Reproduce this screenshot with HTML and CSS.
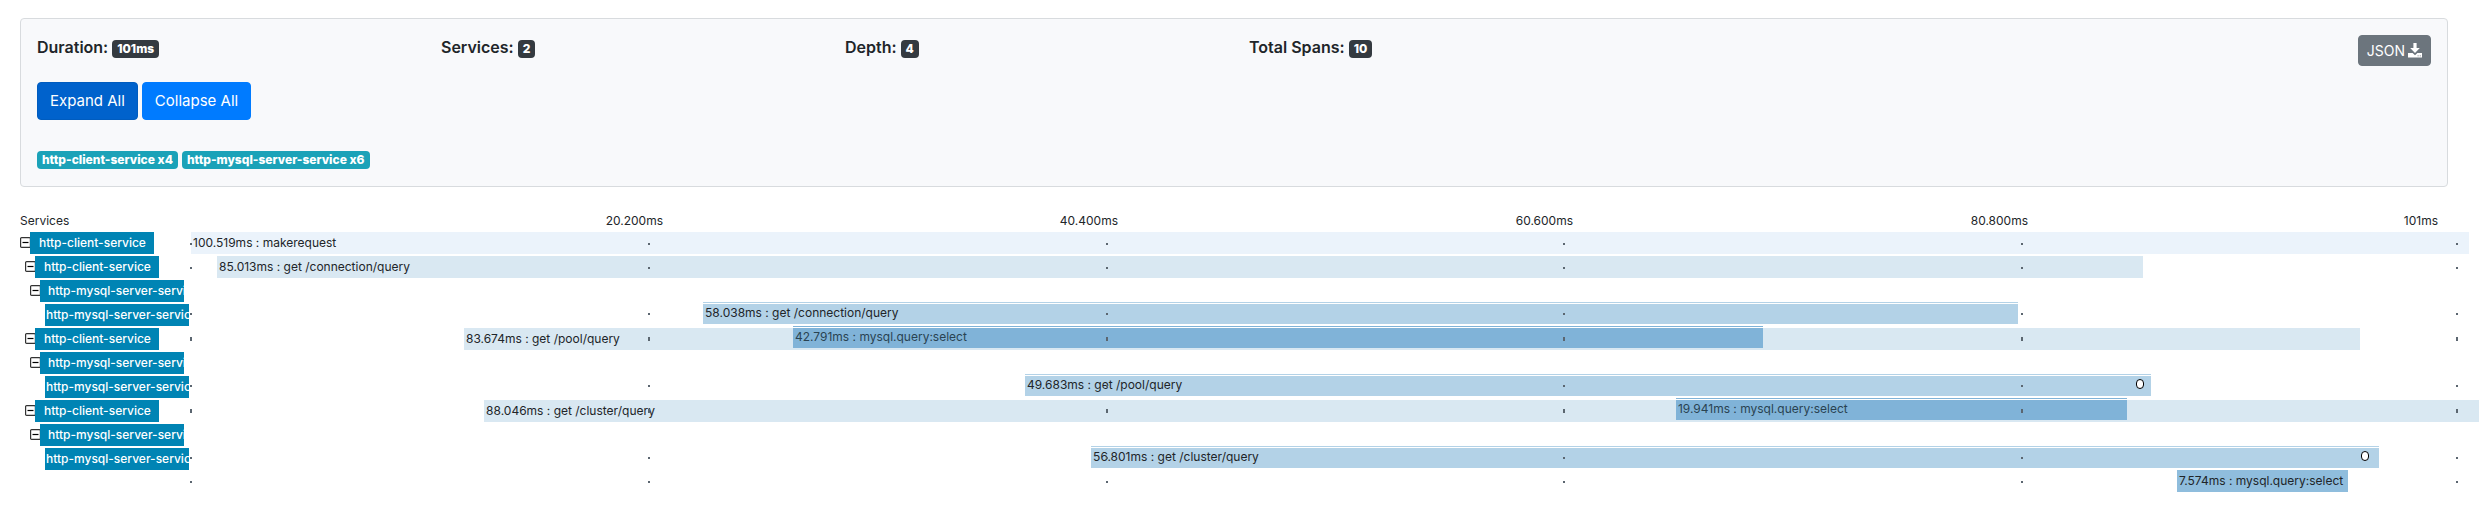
FILE: index.html
```html
<!DOCTYPE html>
<html lang="en">
<head>
<meta charset="utf-8">
<title>Trace</title>
<link rel="stylesheet" href="styles.css">
</head>
<body>
<section class="card">
  <div class="stats">
    <div class="stat">Duration: <span class="badge badge-dark">101ms</span></div>
    <div class="stat">Services: <span class="badge badge-dark">2</span></div>
    <div class="stat">Depth: <span class="badge badge-dark">4</span></div>
    <div class="stat">Total Spans: <span class="badge badge-dark">10</span></div>
    <div class="stat stat-action">
      <button class="btn btn-sm" type="button">JSON
        <svg class="download" viewBox="0 0 14 15" aria-hidden="true"><path d="M5.4 0h3.2v5h3.2L7 10 2.2 5h3.2z"/><path d="M0 10h4.600L7 12.200 9.400 10H14v4.500H0zM9.500 12.600v.7h1.200v-.7zM11.700 12.600v.7h1.200v-.7z" fill-rule="evenodd"/></svg>
      </button>
    </div>
  </div>
  <div class="actions">
    <button class="btn btn-active" type="button">Expand All</button>
    <button class="btn" type="button">Collapse All</button>
  </div>
  <div class="names">
    <span class="badge badge-info">http-client-service x4</span>
    <span class="badge badge-info">http-mysql-server-service x6</span>
  </div>
</section>
<main class="trace" id="trace">
  <div class="row head">
    <span>Services</span>
    <div class="scale"><span>20.200ms</span><span>40.400ms</span><span>60.600ms</span><span>80.800ms</span><span>101ms</span></div>
  </div>
</main>
<script src="trace.js"></script>
</body>
</html>
```
FILE: styles.css
```css
* { box-sizing: border-box; }
body {
  margin: 0;
  padding: 18px 0 20px 20px;
  background: #fff;
  color: #212529;
  font-family: Inter, Roboto, "Liberation Sans", sans-serif;
  font-size: 16px;
  line-height: 24px;
}
button { font: inherit; }
.card {
  margin-right: 44px;
  padding: 16px 1px 17px;
  border: 1px solid #d8dbde;
  border-radius: 4px;
  background: #f8f9fb;
}
.stats { display: grid; grid-template-columns: repeat(6, 1fr); }
.stat { padding: 0 15px; font-weight: 600; }
.stat-action { grid-column: 6; text-align: right; }
.actions { display: flex; gap: 4px; padding: 16px 15px 0; }
.names { display: flex; gap: 4px; padding: 31px 15px 0; }
.badge {
  display: inline-block;
  padding: 3px 5px;
  border-radius: 4px;
  color: #fff;
  font-size: 12px;
  font-weight: 800;
  line-height: 12px;
}
.badge-dark { background: #343a40; }
.badge-info { background: #1ba2b8; }
.btn {
  padding: 6px 12px;
  border: 1px solid #007bff;
  border-radius: 4px;
  background: #007bff;
  color: #fff;
  font-size: 15px;
}
.btn-active { border-color: #005cbf; background: #0062cc; }
.btn-sm {
  display: inline-flex;
  align-items: center;
  gap: 3px;
  padding: 4px 8px;
  border-color: #6c757d;
  background: #6c757d;
  font-size: 14px;
  font-weight: 400;
  line-height: 21px;
}
.download { width: 14px; height: 15px; fill: #fff; }

.trace { padding: 23px 13px 0 0; font-size: 12px; line-height: 22px; }
.row { display: grid; grid-template-columns: 171px 1fr; height: 24px; }
.head { height: 22px; }
.scale {
  display: grid;
  grid-template-columns: 472fr 455fr 455fr 455fr 410fr 41fr;
  text-align: right;
}
.service { display: flex; align-items: flex-start; min-width: 0; }
.depth-1 { padding-left: 5px; }
.depth-2 { padding-left: 10px; }
.depth-3 { padding-left: 25px; }
.toggle {
  display: block;
  flex: none;
  width: 11px;
  height: 11px;
  margin: 5px -1px 0 0;
  padding: 0;
  border: 0;
  background: none;
}
.toggle svg { display: block; width: 11px; height: 11px; }
.name {
  flex: none;
  width: 124px;
  height: 22px;
  padding-left: 9px;
  overflow: hidden;
  background: #0084b4;
  color: #fff;
  font-weight: 500;
  white-space: nowrap;
}
.name-wide { width: 144px; padding-left: 8px; }
.depth-3 .name { padding-left: 1px; }
.track { display: grid; grid-template-columns: 100%; align-items: start; }
.track > * { grid-area: 1 / 1; }
.bar { height: 22px; padding-left: 2px; white-space: nowrap; }
.raised { margin-top: -2px; }
.lined {
  background-image: linear-gradient(#fff, #fff);
  background-position: 0 1px;
  background-size: 100% 1px;
  background-repeat: no-repeat;
}
.level-0 { background-color: #ebf3fb; }
.level-1 { background-color: #d9e8f2; }
.level-2 { background-color: #b3d2e7; }
.level-3 { background-color: #80b3d8; color: #2a4352; }
.level-4 { background-color: #8fbddd; }
.ticks {
  display: grid;
  grid-template-columns: 20% 20% 20% 20% 19% auto;
  margin-left: -1px;
  padding-top: 11px;
}
.ticks i { width: 2px; height: 2px; background: #5b6670; }
.mark {
  width: 8px;
  height: 10px;
  margin-top: 3px;
  border: 1px solid #000;
  border-radius: 4px;
  background: #fff;
}
```
FILE: trace.js
```javascript
const client = "http-client-service";
const mysql = "http-mysql-server-service";
// Bars are [start %, width %, level, raised, text]; ticks are "low", "high" or both.
const rows = [
  { name: client, depth: 0, bars: [[0, 99.56, 0, false, "100.519ms : makerequest"]], ticks: ["low"] },
  { name: client, depth: 1, bars: [[1.14, 84.18, 1, false, "85.013ms : get /connection/query"]], ticks: ["low"] },
  { name: mysql, depth: 2, bars: [], ticks: [] },
  { name: mysql, depth: 3, bars: [[22.38, 57.47, 2, true, "58.038ms : get /connection/query"]], ticks: ["high"] },
  { name: client, depth: 1, bars: [[11.93, 82.87, 1, false, "83.674ms : get /pool/query"], [26.31, 42.4, 3, true, "42.791ms : mysql.query:select"]], ticks: ["low", "high"] },
  { name: mysql, depth: 2, bars: [], ticks: [] },
  { name: mysql, depth: 3, bars: [[36.45, 49.21, 2, true, "49.683ms : get /pool/query"]], ticks: ["high"], mark: 85.01 },
  { name: client, depth: 1, bars: [[12.81, 87.19, 1, false, "88.046ms : get /cluster/query"], [64.9, 19.71, 3, true, "19.941ms : mysql.query:select"]], ticks: ["low", "high"] },
  { name: mysql, depth: 2, bars: [], ticks: [] },
  { name: mysql, depth: 3, bars: [[39.34, 56.29, 2, true, "56.801ms : get /cluster/query"]], ticks: ["high"], mark: 94.84 },
  { name: "", depth: 0, bars: [[86.8, 7.47, 4, true, "7.574ms : mysql.query:select"]], ticks: ["high"] }
];
const toggle = '<button class="toggle" type="button" aria-label="Collapse"><svg viewBox="0 0 11 11"><rect x=".6" y=".6" width="9.800" height="9.800" rx="1" fill="#fff" stroke="#333" stroke-width="1.200"/><path d="M2.500 5.500h6" stroke="#000" stroke-width="1.200"/></svg></button>';
const html = rows.map(r => {
  const name = r.name
    ? `${r.depth < 3 ? toggle : ""}<span class="name${r.name === mysql ? " name-wide" : ""}">${r.name}</span>`
    : "";
  const bars = r.bars.map(([left, width, level, raised, text]) =>
    `<div class="bar level-${level}${raised ? " raised" : ""}${raised && level < 4 ? " lined" : ""}" style="margin-left:${left}%;width:${width}%">${text}</div>`).join("");
  const ticks = r.ticks.map(t => `<div class="ticks${t === "high" ? " raised" : ""}">${"<i></i>".repeat(6)}</div>`).join("");
  const mark = r.mark ? `<span class="mark" style="margin-left:${r.mark}%"></span>` : "";
  return `<div class="row"><div class="service depth-${r.depth}">${name}</div><div class="track">${bars}${ticks}${mark}</div></div>`;
}).join("");
document.getElementById("trace").insertAdjacentHTML("beforeend", html);
```
